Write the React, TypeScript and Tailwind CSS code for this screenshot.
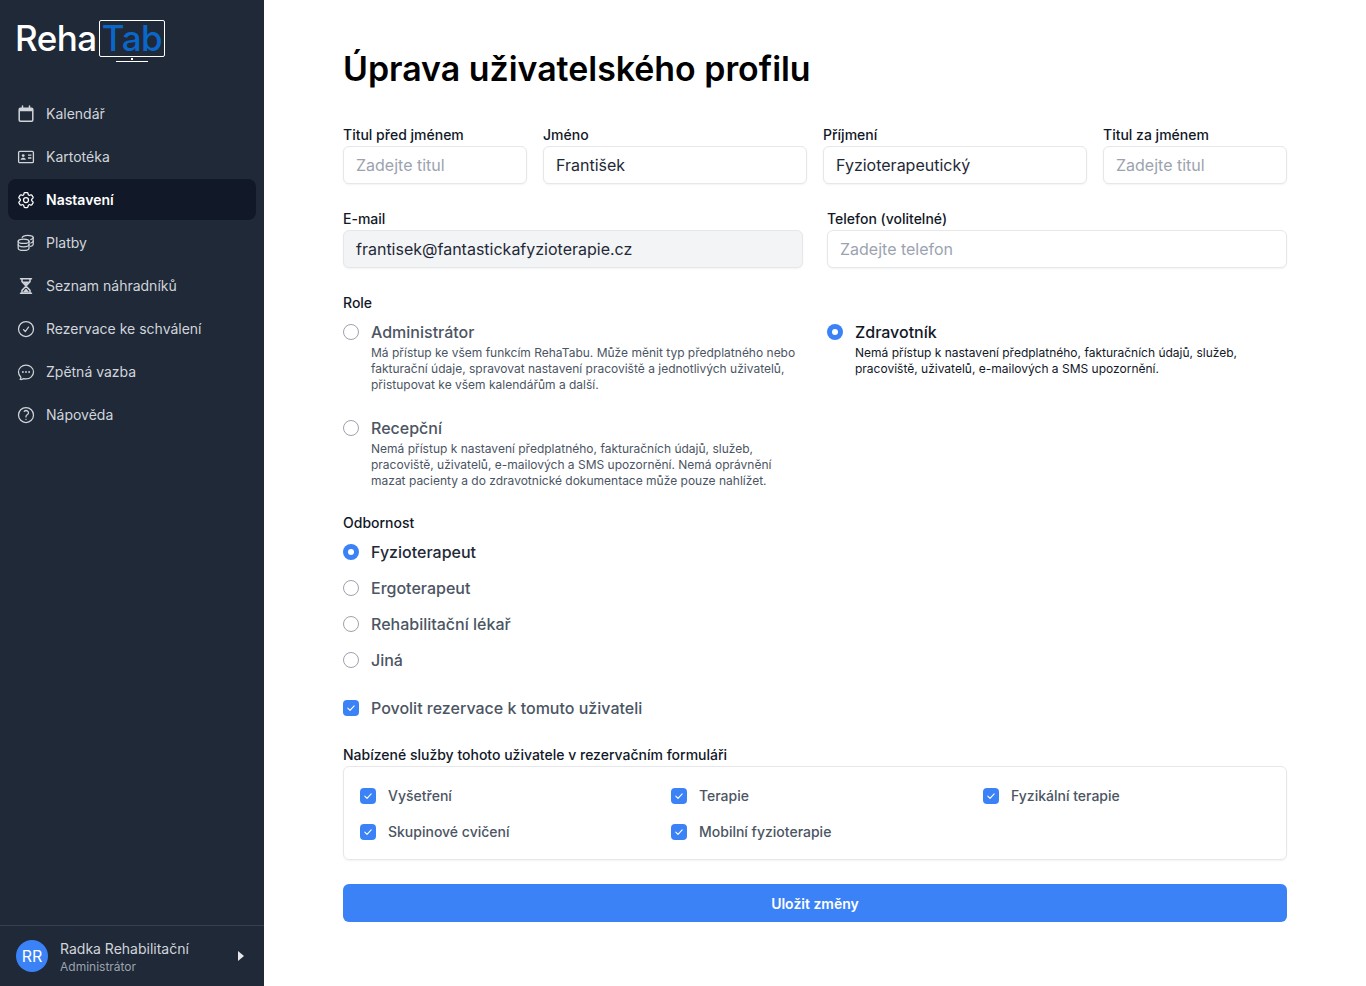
import { ReactNode } from 'react';
import {
  HiOutlineCog6Tooth,
  HiOutlineCheckCircle,
  HiOutlineChatBubbleOvalLeftEllipsis,
  HiOutlineQuestionMarkCircle,
} from 'react-icons/hi2';

const iconClass = 'w-5 h-5 shrink-0';

function CalendarIcon() {
  return (
    <svg viewBox="0 0 20 20" className={iconClass} fill="none" stroke="currentColor" strokeWidth="1.5">
      <rect x="3.2" y="4.2" width="13.6" height="13" rx="1.2" />
      <path d="M3.2 5.4a1.2 1.2 0 0 1 1.2-1.2h11.2a1.2 1.2 0 0 1 1.2 1.2v1.8H3.2z" fill="currentColor" stroke="none" />
      <path d="M6.5 2v2.5M13.5 2v2.5" strokeLinecap="round" />
    </svg>
  );
}

function IdCardIcon() {
  return (
    <svg viewBox="0 0 20 20" className={iconClass} fill="none" stroke="currentColor" strokeWidth="1.3">
      <rect x="2.6" y="4.4" width="14.8" height="11.2" rx="1.2" />
      <circle cx="7.2" cy="8.6" r="1.4" fill="currentColor" stroke="none" />
      <path d="M4.6 12.8c.3-1.4 1.3-2 2.6-2s2.3.6 2.6 2z" fill="currentColor" stroke="none" />
      <path d="M12 8.2h3.4M12 11h3.4" />
    </svg>
  );
}

function CoinsIcon() {
  return (
    <svg viewBox="0 0 20 20" className={iconClass} fill="none" stroke="currentColor" strokeWidth="1.25" strokeLinecap="round">
      <ellipse cx="7.6" cy="8.2" rx="5.4" ry="2.2" />
      <path d="M2.2 8.2v7c0 1.2 2.4 2.2 5.4 2.2s5.4-1 5.4-2.2v-7" />
      <path d="M2.2 11.6c0 1.2 2.4 2.2 5.4 2.2s5.4-1 5.4-2.2" />
      <path d="M6.2 4.6c0-1.2 2.4-2.2 5.4-2.2s5.6 1 5.6 2.2v6.8c0 .8-1.1 1.5-2.6 1.9" />
      <path d="M14.8 6.6c1.4-.4 2.4-1 2.4-2M14.8 10c1.4-.4 2.4-1 2.4-1.9" />
    </svg>
  );
}

function HourglassIcon() {
  return (
    <svg viewBox="0 0 20 20" className={iconClass} fill="none" stroke="currentColor" strokeWidth="1.5" strokeLinecap="round">
      <path d="M4.5 2.8h11M4.5 17.2h11" />
      <path d="M6 3v2.6L10 10l4-4.4V3M6 17v-2.6L10 10l4 4.4V17" />
      <path d="M6.6 5.6h6.8L10 9.4zM6.6 16.6 10 12.4l3.4 4.2z" fill="currentColor" stroke="none" />
    </svg>
  );
}

const navItems: { label: string; icon: ReactNode; active?: boolean }[] = [
  { label: 'Kalendář', icon: <CalendarIcon /> },
  { label: 'Kartotéka', icon: <IdCardIcon /> },
  { label: 'Nastavení', icon: <HiOutlineCog6Tooth className={iconClass} />, active: true },
  { label: 'Platby', icon: <CoinsIcon /> },
  { label: 'Seznam náhradníků', icon: <HourglassIcon /> },
  { label: 'Rezervace ke schválení', icon: <HiOutlineCheckCircle className={iconClass} /> },
  { label: 'Zpětná vazba', icon: <HiOutlineChatBubbleOvalLeftEllipsis className={iconClass} /> },
  { label: 'Nápověda', icon: <HiOutlineQuestionMarkCircle className={iconClass} /> },
];

function Logo() {
  return (
    <div className="flex items-start h-[44px] pl-[15px] pt-5">
      <span className="w-[84px] text-[35px] leading-[37px] font-medium text-white tracking-[-0.5px]">Reha</span>
      <div className="flex flex-col items-center">
        <div className="w-[66px] h-[37px] border-[1.5px] border-white rounded-[2px] flex items-center justify-center">
          <span className="text-[35px] leading-[35px] font-medium text-[#0a66c8] tracking-[-0.5px]">Tab</span>
        </div>
        <div className="w-[2px] h-[2px] bg-white mt-[1px]" />
        <div className="w-[32px] h-px bg-white mt-[1px]" />
      </div>
    </div>
  );
}

function Sidebar() {
  return (
    <aside className="w-[264px] shrink-0 h-[986px] bg-[#1f2937] flex flex-col">
      <Logo />
      <nav className="mt-[49px] px-2 flex flex-col gap-[2px]">
        {navItems.map((item) => (
          <div
            key={item.label}
            className={`h-[41px] rounded-lg px-2 flex items-center gap-2.5 text-sm ${
              item.active ? 'bg-[#111827] text-white font-semibold' : 'text-[#d1d5db]'
            }`}
          >
            {item.icon}
            <span>{item.label}</span>
          </div>
        ))}
      </nav>
      <div className="mt-auto h-[61px] border-t border-[#374151] pl-4 pr-[19px] flex items-center">
        <div className="w-8 h-8 rounded-full bg-[#3b82f6] text-white text-base flex items-center justify-center">
          RR
        </div>
        <div className="ml-3 pt-[2px]">
          <div className="text-sm leading-5 text-[#d1d5db]">Radka Rehabilitační</div>
          <div className="text-xs leading-4 text-[#9ca3af]">Administrátor</div>
        </div>
        <svg viewBox="0 0 8 12" className="ml-auto w-2 h-3 text-[#e5e7eb]" fill="currentColor">
          <path d="M1 1l6 5-6 5z" />
        </svg>
      </div>
    </aside>
  );
}

function Field({ label, value, placeholder, disabled }: { label: string; value?: string; placeholder?: string; disabled?: boolean }) {
  return (
    <div>
      <label className="block text-sm leading-5 font-medium text-[#111827] mb-px">{label}</label>
      <div
        className={`h-[38px] rounded-md border border-[#e5e7eb] px-3 flex items-center text-base shadow-xs ${
          disabled ? 'bg-[#f3f4f6]' : 'bg-white'
        } ${value ? 'text-[#1f2937]' : 'text-[#9ca3af]'}`}
      >
        {value ?? placeholder}
      </div>
    </div>
  );
}

function Radio({ checked }: { checked?: boolean }) {
  return checked ? (
    <span className="w-4 h-4 shrink-0 rounded-full bg-[#3b82f6] flex items-center justify-center">
      <span className="w-1.5 h-1.5 rounded-full bg-white" />
    </span>
  ) : (
    <span className="w-4 h-4 shrink-0 rounded-full border border-[#9ca3af] bg-white" />
  );
}

function Check() {
  return (
    <span className="w-4 h-4 shrink-0 rounded bg-[#3b82f6] flex items-center justify-center">
      <svg viewBox="0 0 16 16" className="w-4 h-4" fill="none" stroke="white" strokeWidth="1.1" strokeLinecap="round" strokeLinejoin="round">
        <path d="M4.8 8.2l2.2 2.2 4.2-4.6" />
      </svg>
    </span>
  );
}

function RoleOption({ title, text, checked }: { title: string; text: string[]; checked?: boolean }) {
  return (
    <div className="flex gap-3">
      <div className="h-6 flex items-center">
        <Radio checked={checked} />
      </div>
      <div>
        <div className={`text-base leading-6 font-medium ${checked ? 'text-[#111827]' : 'text-[#4b5563]'}`}>{title}</div>
        <div className={`mt-px text-xs leading-4 ${checked ? 'text-[#111827]' : 'text-[#4b5563]'}`}>
          {text.map((line) => (
            <div key={line} className="whitespace-nowrap">{line}</div>
          ))}
        </div>
      </div>
    </div>
  );
}

const specialties = ['Fyzioterapeut', 'Ergoterapeut', 'Rehabilitační lékař', 'Jiná'];
const services = ['Vyšetření', 'Terapie', 'Fyzikální terapie', 'Skupinové cvičení', 'Mobilní fyzioterapie'];

export default function App() {
  return (
    <div className="flex h-[986px] overflow-hidden bg-white font-['Inter',sans-serif]">
      <Sidebar />
      <main className="flex-1 px-[79px] pt-[45px]">
        <h1 className="text-[33.9px] leading-[48px] font-semibold text-black">Úprava uživatelského profilu</h1>

        <div className="mt-[32px] grid grid-cols-[184px_264px_264px_184px] gap-4">
          <Field label="Titul před jménem" placeholder="Zadejte titul" />
          <Field label="Jméno" value="František" />
          <Field label="Příjmení" value="Fyzioterapeutický" />
          <Field label="Titul za jménem" placeholder="Zadejte titul" />
        </div>

        <div className="mt-[25px] grid grid-cols-2 gap-6">
          <Field label="E-mail" value="frantisek@fantastickafyzioterapie.cz" disabled />
          <Field label="Telefon (volitelné)" placeholder="Zadejte telefon" />
        </div>

        <div className="mt-[25px] text-sm leading-5 font-medium text-[#111827]">Role</div>
        <div className="mt-[7px] grid grid-cols-2 gap-x-6 gap-y-[23px]">
          <RoleOption
            title="Administrátor"
            text={[
              'Má přístup ke všem funkcím RehaTabu. Může měnit typ předplatného nebo',
              'fakturační údaje, spravovat nastavení pracoviště a jednotlivých uživatelů,',
              'přistupovat ke všem kalendářům a další.',
            ]}
          />
          <RoleOption
            checked
            title="Zdravotník"
            text={[
              'Nemá přístup k nastavení předplatného, fakturačních údajů, služeb,',
              'pracoviště, uživatelů, e-mailových a SMS upozornění.',
            ]}
          />
          <RoleOption
            title="Recepční"
            text={[
              'Nemá přístup k nastavení předplatného, fakturačních údajů, služeb,',
              'pracoviště, uživatelů, e-mailových a SMS upozornění. Nemá oprávnění',
              'mazat pacienty a do zdravotnické dokumentace může pouze nahlížet.',
            ]}
          />
        </div>

        <div className="mt-6 text-sm leading-5 font-medium text-[#111827]">Odbornost</div>
        <div className="mt-[7px] flex flex-col gap-3">
          {specialties.map((name, i) => (
            <div key={name} className="h-6 flex items-center gap-3">
              <Radio checked={i === 0} />
              <span className={`text-base font-medium ${i === 0 ? 'text-[#1f2937]' : 'text-[#4b5563]'}`}>{name}</span>
            </div>
          ))}
        </div>

        <div className="mt-[24px] h-6 flex items-center gap-3">
          <Check />
          <span className="text-base font-medium text-[#4b5563]">Povolit rezervace k tomuto uživateli</span>
        </div>

        <div className="mt-[25px] text-sm leading-5 font-medium text-[#111827]">
          Nabízené služby tohoto uživatele v rezervačním formuláři
        </div>
        <div className="mt-px h-[94px] rounded-md border border-[#e5e7eb] shadow-xs pl-4 pt-[17px] grid grid-cols-[311px_312px_1fr] auto-rows-[24px] gap-y-3">
          {services.map((name) => (
            <div key={name} className="flex items-center gap-3">
              <Check />
              <span className="text-sm font-medium text-[#4b5563]">{name}</span>
            </div>
          ))}
        </div>

        <button className="mt-6 w-full h-[38px] pt-px rounded-md bg-[#3b82f6] text-white text-sm font-semibold">
          Uložit změny
        </button>
      </main>
    </div>
  );
}
